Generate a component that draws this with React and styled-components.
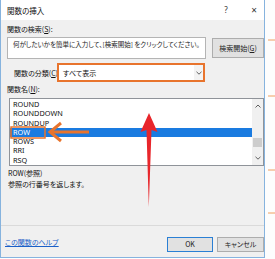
import React from 'react';
import styled, { createGlobalStyle } from 'styled-components';

const Global = createGlobalStyle`
  html, body { margin: 0; padding: 0; background: #fff; }
  body { font-family: "Noto Sans CJK JP", "Noto Sans", sans-serif; }
`;

const Page = styled.div`
  position: relative;
  width: 275px;
  height: 259px;
  display: flex;
  overflow: hidden;
  background: #fff;
`;

const Dialog = styled.div`
  width: 265px;
  height: 258px;
  box-sizing: border-box;
  border: 1px solid #86b3de;
  border-top: none;
  background: #f0f0f0;
  display: flex;
  flex-direction: column;
  font-family: "Noto Sans CJK JP", sans-serif;
  font-feature-settings: "palt" 1;
  font-size: 7px;
  color: #111;
`;

const TitleBar = styled.div`
  height: 20px;
  flex: none;
  background: #fff;
  display: flex;
  align-items: center;
  padding-left: 6px;
  font-size: 7.5px;
`;

const TitleButtons = styled.div`
  margin-left: auto;
  display: flex;
  gap: 8px;
`;

const TitleBtn = styled.div`
  width: 20px;
  text-align: center;
  font-family: "Noto Sans", sans-serif;
  font-size: ${p => p.$big ? '10px' : '8px'};
  color: #333;
  line-height: 20px;
`;

const Body = styled.div`
  flex: 1;
  display: flex;
  flex-direction: column;
  padding-left: 6px;
`;

const Label = styled.div`
  height: 10px;
  line-height: 10px;
  margin-top: ${p => p.$mt || 0}px;
  padding-left: ${p => p.$pl || 0}px;
  white-space: nowrap;
`;

const SearchRow = styled.div`
  margin-top: 3px;
  height: 22px;
  display: flex;
  align-items: center;
  gap: 6px;
`;

const TextBox = styled.div`
  width: 199px;
  height: 22px;
  box-sizing: border-box;
  background: #fff;
  border: 1px solid #b4b4b4;
  padding: 2px 0 0 5px;
  line-height: 9px;
  font-size: 6.5px;
  white-space: nowrap;
  overflow: hidden;
  color: #222;
`;

const Button = styled.div`
  width: ${p => p.$w}px;
  height: ${p => p.$h || 15}px;
  box-sizing: border-box;
  background: #e1e1e1;
  border: 1px solid ${p => p.$default ? '#2a7fd4' : '#adadad'};
  display: flex;
  align-items: center;
  justify-content: center;
  white-space: nowrap;
  color: #222;
`;

const CategoryRow = styled.div`
  margin-top: 4px;
  height: 19px;
  display: flex;
  align-items: center;
`;

const CatLabel = styled.div`
  width: 50px;
  box-sizing: border-box;
  padding-left: 7px;
  white-space: nowrap;
`;

const Select = styled.div`
  width: 148px;
  height: 19px;
  box-sizing: border-box;
  border: 2px solid #e8742d;
  background: #fff;
  display: flex;
  align-items: center;
  padding-left: 4px;
`;

const SelectArrow = styled.div`
  margin-left: auto;
  width: 9px;
  height: 15px;
  background: #f3f3f3;
  display: flex;
  align-items: center;
  justify-content: center;
`;

const ListBox = styled.div`
  margin: 4px 0 0 2px;
  width: 255px;
  height: 68px;
  box-sizing: border-box;
  border: 1px solid #8f9399;
  background: #fff;
  display: flex;
`;

const Items = styled.div`
  flex: 1;
  padding-top: 1px;
  font-family: "Noto Sans", sans-serif;
  font-size: 7.3px;
`;

const Item = styled.div`
  height: 9.3px;
  line-height: 9.3px;
  padding-left: 3px;
  background: ${p => p.$sel ? '#1a7be0' : 'transparent'};
  color: ${p => p.$sel ? '#fff' : '#111'};
`;

const ScrollBar = styled.div`
  width: 11px;
  background: #f0f0f0;
  display: flex;
  flex-direction: column;
`;

const ScrollArrow = styled.div`
  height: 14px;
  display: flex;
  align-items: center;
  justify-content: center;
`;

const Track = styled.div`
  flex: 1;
  padding-top: 25px;
`;

const Thumb = styled.div`
  width: 9px;
  height: 9px;
  margin: 0 auto;
  background: #cdcdcd;
`;

const Footer = styled.div`
  height: 31px;
  flex: none;
  border-top: 1px solid #dadada;
  display: flex;
  align-items: center;
  padding-left: 4px;
`;

const HelpLink = styled.span`
  color: #1a5fc8;
  text-decoration: underline;
  white-space: nowrap;
`;

const ButtonGroup = styled.div`
  margin-left: auto;
  margin-top: 5px;
  display: flex;
  gap: 4px;
`;

const Sheet = styled.div`
  flex: 1;
  background: #fdfdfd;
`;

const Overlay = styled.svg`
  position: absolute;
  left: 0;
  top: 0;
  pointer-events: none;
`;

const Chevron = ({ up }) => (
  <svg width="6" height="4" viewBox="0 0 6 4">
    <path d={up ? 'M0.5 3.5 L3 1 L5.5 3.5' : 'M0.5 0.8 L3 3.2 L5.5 0.8'} fill="none" stroke="#606060" strokeWidth="1" />
  </svg>
);

const items = ['ROUND', 'ROUNDDOWN', 'ROUNDUP', 'ROW', 'ROWS', 'RRI', 'RSQ'];

export default function App() {
  return (
    <Page>
      <Global />
      <Dialog>
        <TitleBar>
          関数の挿入
          <TitleButtons>
            <TitleBtn>?</TitleBtn>
            <TitleBtn $big>×</TitleBtn>
          </TitleButtons>
        </TitleBar>
        <Body>
          <Label $mt={4}>関数の検索(<u>S</u>):</Label>
          <SearchRow>
            <TextBox>何がしたいかを簡単に入力して、[検索開始] をクリックしてください。</TextBox>
            <Button $w={52} $h={20}>検索開始(<u>G</u>)</Button>
          </SearchRow>
          <CategoryRow>
            <CatLabel>関数の分類(<u>C</u>):</CatLabel>
            <Select>
              すべて表示
              <SelectArrow><Chevron /></SelectArrow>
            </Select>
          </CategoryRow>
          <Label $mt={2}>関数名(<u>N</u>):</Label>
          <ListBox>
            <Items>
              {items.map(t => (
                <Item key={t} $sel={t === 'ROW'}>{t}</Item>
              ))}
            </Items>
            <ScrollBar>
              <ScrollArrow><Chevron up /></ScrollArrow>
              <Track><Thumb /></Track>
              <ScrollArrow><Chevron /></ScrollArrow>
            </ScrollBar>
          </ListBox>
          <Label $mt={2} $pl={1}>ROW(参照)</Label>
          <Label $mt={1} $pl={1}>参照の行番号を返します。</Label>
        </Body>
        <Footer>
          <HelpLink>この関数のヘルプ</HelpLink>
          <ButtonGroup>
            <Button $w={46} $default>OK</Button>
            <Button $w={47}>キャンセル</Button>
          </ButtonGroup>
        </Footer>
      </Dialog>
      <Sheet />
      <Overlay width="275" height="259" viewBox="0 0 275 259">
        <rect x="11" y="127" width="34" height="11" fill="none" stroke="#e8742d" strokeWidth="1.5" />
        <path d="M61 123 L50 132 L61 141" fill="none" stroke="#e8742d" strokeWidth="3" strokeLinejoin="miter" />
        <line x1="51" y1="132" x2="89" y2="132" stroke="#e8742d" strokeWidth="3" />
        <polygon points="149,113 157.5,132 151.5,130 148.8,207 146.5,130 140.5,132" fill="#e8262b" />
        <line x1="268" y1="40" x2="275" y2="40" stroke="#f0a060" strokeWidth="1" />
        <line x1="268" y1="96" x2="275" y2="96" stroke="#f0a060" strokeWidth="1" />
        <line x1="268" y1="170" x2="275" y2="170" stroke="#f0a060" strokeWidth="1" />
        <line x1="268" y1="213" x2="275" y2="213" stroke="#f0a060" strokeWidth="1" />
      </Overlay>
    </Page>
  );
}
